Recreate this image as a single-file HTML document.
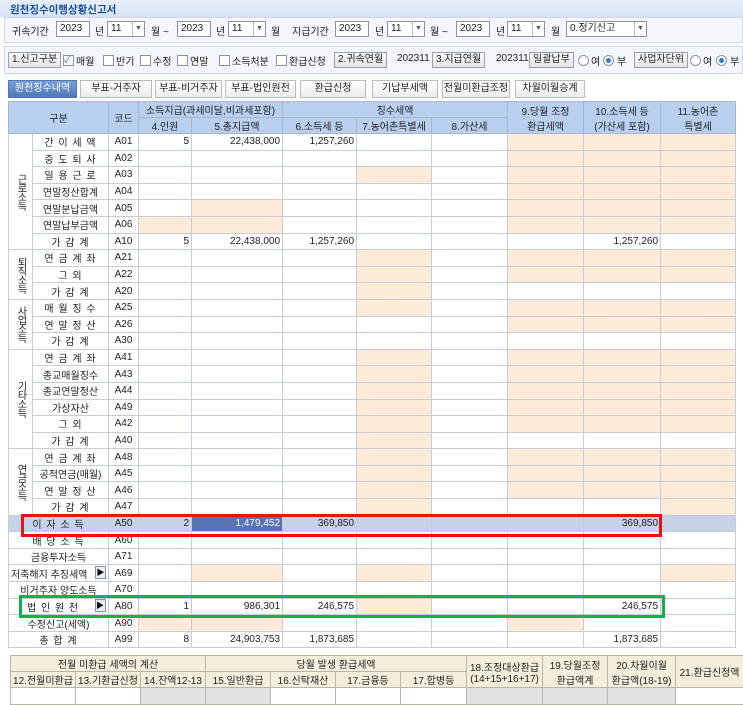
<!DOCTYPE html>
<html><head><meta charset="utf-8"><style>
*{box-sizing:border-box;margin:0;padding:0}
body{width:743px;height:705px;background:#fff;font-family:"Liberation Sans","Noto Sans CJK KR","NanumGothic",sans-serif;font-size:10px;color:#222;position:relative;overflow:hidden}
.a{position:absolute;white-space:nowrap}
.title{left:0;top:0;width:743px;height:17px;background:linear-gradient(#e6eefa,#d6e3f6);color:#1d4f9e;font-weight:bold;padding:2px 0 0 10px;font-size:10.5px}
.panel{left:4px;width:739px;background:#f3f6fb;border:1px solid #cfd8e6}
.in{background:#fff;border:1px solid #8a94a6;height:16px;line-height:14px;padding-left:3px;font-size:10px}
.sel{background:#fff;border:1px solid #8a94a6;height:16px;line-height:14px;padding-left:3px;font-size:10px}
.sel i{position:absolute;right:0;top:0;width:12px;height:14px;border-left:1px solid #bbb;font-style:normal;font-size:7px;text-align:center;line-height:14px;color:#555}
.btn{background:linear-gradient(#fafafa,#e4e4e4);border:1px solid #9aa0a8;height:16px;line-height:14px;padding:0 3px;font-size:10px}
.cb{width:11px;height:11px;border:1px solid #8a94a6;background:#fff}
.rd{width:11px;height:11px;border:1px solid #8a94a6;border-radius:50%;background:#fff}
.rd.on:after{content:"";position:absolute;left:2px;top:2px;width:5px;height:5px;border-radius:50%;background:#3a78d0}
.tab{top:80px;height:18px;line-height:16px;text-align:center;border:1px solid #b5bcc8;background:linear-gradient(#fff,#ececec);font-size:10px}
.tab.on{background:linear-gradient(#7a9fd4,#4f78b8);color:#fff;border-color:#4f78b8}
table{border-collapse:collapse;table-layout:fixed;position:absolute}
#t{left:8px;top:101px;width:733px}
#t td{border:1px solid #c6cdda;height:16.6px;font-size:10px;padding:0 2px;overflow:hidden;white-space:nowrap}
#t thead td{background:#b8cfee;text-align:center;height:16px;border-color:#a9b7cc}
#t td.l{text-align:center;letter-spacing:1px}
#t td.c{text-align:center}
#t td.n{text-align:right}
#t td.p{background:#fdebd7}
#t td.x{border:none;background:#fff !important}
#t td.g{text-align:center;writing-mode:vertical-lr;letter-spacing:-1px}
#t tr.h td{background:#c6d2e8}
#t tr.h td.dk{background:#5873b4;color:#fff}
.ar{display:inline-block;width:11px;height:13px;background:#e8eef8;border:1px solid #8a94a6;float:right;font-size:8px;line-height:11px;text-align:center;color:#000}
#b{left:10px;top:655px;width:733px}
#b td{border:1px solid #b9b6a6;background:#f3efdc;text-align:center;font-size:10px;white-space:nowrap;overflow:hidden;height:14px}
#b tr.d td{background:#fff;height:17px}
#b tr.d td.gr{background:#e2e2e2}
.box{position:absolute;border:3px solid}
</style></head><body>
<div class="a title">원천징수이행상황신고서</div>
<div class="a panel" style="top:17px;height:26px"></div>
<div class="a" style="left:12px;top:23px">귀속기간</div>
<div class="a in" style="left:56px;top:21px;width:34px">2023</div>
<div class="a" style="left:95px;top:23px">년</div>
<div class="a sel" style="left:107px;top:21px;width:38px">11<i>▼</i></div>
<div class="a" style="left:151px;top:23px">월 ~</div>
<div class="a in" style="left:177px;top:21px;width:34px">2023</div>
<div class="a" style="left:216px;top:23px">년</div>
<div class="a sel" style="left:228px;top:21px;width:38px">11<i>▼</i></div>
<div class="a" style="left:271px;top:23px">월</div>
<div class="a" style="left:292px;top:23px">지급기간</div>
<div class="a in" style="left:335px;top:21px;width:34px">2023</div>
<div class="a" style="left:375px;top:23px">년</div>
<div class="a sel" style="left:387px;top:21px;width:38px">11<i>▼</i></div>
<div class="a" style="left:430px;top:23px">월 ~</div>
<div class="a in" style="left:456px;top:21px;width:34px">2023</div>
<div class="a" style="left:496px;top:23px">년</div>
<div class="a sel" style="left:507px;top:21px;width:38px">11<i>▼</i></div>
<div class="a" style="left:551px;top:23px">월</div>
<div class="a sel" style="left:566px;top:21px;width:81px">0.정기신고<i>▼</i></div>

<div class="a panel" style="top:46px;height:28px"></div>
<div class="a btn" style="left:8px;top:52px">1.신고구분</div>
<div class="a cb" style="left:63px;top:55px;color:#3a78d0;font-size:10px;line-height:9px">✓</div><div class="a" style="left:76px;top:53px">매월</div>
<div class="a cb" style="left:103px;top:55px"></div><div class="a" style="left:116px;top:53px">반기</div>
<div class="a cb" style="left:140px;top:55px"></div><div class="a" style="left:153px;top:53px">수정</div>
<div class="a cb" style="left:177px;top:55px"></div><div class="a" style="left:190px;top:53px">연말</div>
<div class="a cb" style="left:219px;top:55px"></div><div class="a" style="left:232px;top:53px">소득처분</div>
<div class="a cb" style="left:276px;top:55px"></div><div class="a" style="left:289px;top:53px">환급신청</div>
<div class="a btn" style="left:334px;top:52px">2.귀속연월</div>
<div class="a" style="left:397px;top:53px">202311</div>
<div class="a btn" style="left:432px;top:52px">3.지급연월</div>
<div class="a" style="left:496px;top:53px">202311</div>
<div class="a btn" style="left:529px;top:52px">일괄납부</div>
<div class="a rd" style="left:578px;top:55px"></div><div class="a" style="left:591px;top:53px">여</div>
<div class="a rd on" style="left:603px;top:55px"></div><div class="a" style="left:617px;top:53px">부</div>
<div class="a btn" style="left:634px;top:52px">사업자단위</div>
<div class="a rd" style="left:690px;top:55px"></div><div class="a" style="left:703px;top:53px">여</div>
<div class="a rd on" style="left:716px;top:55px"></div><div class="a" style="left:730px;top:53px">부</div>

<div class="a tab on" style="left:8px;width:69px">원천징수내역</div>
<div class="a tab" style="left:80px;width:72px">부표-거주자</div>
<div class="a tab" style="left:155px;width:67px">부표-비거주자</div>
<div class="a tab" style="left:225px;width:71px">부표-법인원천</div>
<div class="a tab" style="left:300px;width:66px">환급신청</div>
<div class="a tab" style="left:372px;width:66px">기납부세액</div>
<div class="a tab" style="left:442px;width:68px">전월미환급조정</div>
<div class="a tab" style="left:515px;width:70px">차월이월승계</div>

<table id="t">
<colgroup><col style="width:24px"><col style="width:76px"><col style="width:30px"><col style="width:53px"><col style="width:91px"><col style="width:74px"><col style="width:75px"><col style="width:76px"><col style="width:76px"><col style="width:77px"><col style="width:75px"><col style="width:6px"></colgroup>
<thead>
<tr><td colspan="2" rowspan="2">구분</td><td rowspan="2">코드</td><td colspan="2">소득지급(과세미달,비과세포함)</td><td colspan="3">징수세액</td><td rowspan="2">9.당월 조정<br>환급세액</td><td rowspan="2">10.소득세 등<br>(가산세 포함)</td><td rowspan="2">11.농어촌<br>특별세</td><td rowspan="2" class="x"></td></tr>
<tr><td>4.인원</td><td>5.총지급액</td><td>6.소득세 등</td><td>7.농어촌특별세</td><td>8.가산세</td></tr>
</thead>
<tbody>
<tr><td class="g" rowspan="7">근로소득</td><td class="l">간 이 세 액</td><td class="c">A01</td><td class="n">5</td><td class="n">22,438,000</td><td class="n">1,257,260</td><td></td><td></td><td class="p"></td><td class="p"></td><td class="p"></td><td class="x"></td></tr>
<tr><td class="l">중 도 퇴 사</td><td class="c">A02</td><td></td><td></td><td></td><td></td><td></td><td class="p"></td><td class="p"></td><td class="p"></td><td class="x"></td></tr>
<tr><td class="l">일 용 근 로</td><td class="c">A03</td><td></td><td></td><td></td><td class="p"></td><td></td><td class="p"></td><td class="p"></td><td class="p"></td><td class="x"></td></tr>
<tr><td class="l" style="letter-spacing:0">연말정산합계</td><td class="c">A04</td><td></td><td></td><td></td><td></td><td></td><td class="p"></td><td class="p"></td><td class="p"></td><td class="x"></td></tr>
<tr><td class="l" style="letter-spacing:0">연말분납금액</td><td class="c">A05</td><td></td><td class="p"></td><td></td><td></td><td></td><td class="p"></td><td class="p"></td><td class="p"></td><td class="x"></td></tr>
<tr><td class="l" style="letter-spacing:0">연말납부금액</td><td class="c">A06</td><td class="p"></td><td class="p"></td><td></td><td></td><td></td><td class="p"></td><td class="p"></td><td class="p"></td><td class="x"></td></tr>
<tr><td class="l">가 감 계</td><td class="c">A10</td><td class="n">5</td><td class="n">22,438,000</td><td class="n">1,257,260</td><td></td><td></td><td></td><td class="n">1,257,260</td><td></td><td class="x"></td></tr>
<tr><td class="g" rowspan="3">퇴직소득</td><td class="l">연 금 계 좌</td><td class="c">A21</td><td></td><td></td><td></td><td class="p"></td><td></td><td class="p"></td><td class="p"></td><td class="p"></td><td class="x"></td></tr>
<tr><td class="l">그 외</td><td class="c">A22</td><td></td><td></td><td></td><td class="p"></td><td></td><td class="p"></td><td class="p"></td><td class="p"></td><td class="x"></td></tr>
<tr><td class="l">가 감 계</td><td class="c">A20</td><td></td><td></td><td></td><td class="p"></td><td></td><td></td><td></td><td></td><td class="x"></td></tr>
<tr><td class="g" rowspan="3">사업소득</td><td class="l">매 월 징 수</td><td class="c">A25</td><td></td><td></td><td></td><td class="p"></td><td></td><td class="p"></td><td class="p"></td><td class="p"></td><td class="x"></td></tr>
<tr><td class="l">연 말 정 산</td><td class="c">A26</td><td></td><td></td><td></td><td></td><td></td><td class="p"></td><td class="p"></td><td class="p"></td><td class="x"></td></tr>
<tr><td class="l">가 감 계</td><td class="c">A30</td><td></td><td></td><td></td><td></td><td></td><td></td><td></td><td></td><td class="x"></td></tr>
<tr><td class="g" rowspan="6">기타소득</td><td class="l">연 금 계 좌</td><td class="c">A41</td><td></td><td></td><td></td><td class="p"></td><td></td><td class="p"></td><td class="p"></td><td class="p"></td><td class="x"></td></tr>
<tr><td class="l" style="letter-spacing:0">종교매월징수</td><td class="c">A43</td><td></td><td></td><td></td><td class="p"></td><td></td><td class="p"></td><td class="p"></td><td class="p"></td><td class="x"></td></tr>
<tr><td class="l" style="letter-spacing:0">종교연말정산</td><td class="c">A44</td><td></td><td></td><td></td><td class="p"></td><td></td><td class="p"></td><td class="p"></td><td class="p"></td><td class="x"></td></tr>
<tr><td class="l" style="letter-spacing:0">가상자산</td><td class="c">A49</td><td></td><td></td><td></td><td class="p"></td><td></td><td class="p"></td><td class="p"></td><td class="p"></td><td class="x"></td></tr>
<tr><td class="l">그 외</td><td class="c">A42</td><td></td><td></td><td></td><td class="p"></td><td></td><td class="p"></td><td class="p"></td><td class="p"></td><td class="x"></td></tr>
<tr><td class="l">가 감 계</td><td class="c">A40</td><td></td><td></td><td></td><td class="p"></td><td></td><td></td><td></td><td></td><td class="x"></td></tr>
<tr><td class="g" rowspan="4">연금소득</td><td class="l">연 금 계 좌</td><td class="c">A48</td><td></td><td></td><td></td><td class="p"></td><td></td><td class="p"></td><td class="p"></td><td class="p"></td><td class="x"></td></tr>
<tr><td class="l" style="letter-spacing:0">공적연금(매월)</td><td class="c">A45</td><td></td><td></td><td></td><td class="p"></td><td></td><td class="p"></td><td class="p"></td><td class="p"></td><td class="x"></td></tr>
<tr><td class="l">연 말 정 산</td><td class="c">A46</td><td></td><td></td><td></td><td class="p"></td><td></td><td class="p"></td><td class="p"></td><td class="p"></td><td class="x"></td></tr>
<tr><td class="l">가 감 계</td><td class="c">A47</td><td></td><td></td><td></td><td class="p"></td><td></td><td></td><td></td><td class="p"></td><td class="x"></td></tr>
<tr class="h"><td colspan="2" class="l">이 자 소 득</td><td class="c">A50</td><td class="n">2</td><td class="n dk">1,479,452</td><td class="n">369,850</td><td></td><td></td><td></td><td class="n">369,850</td><td></td><td class="x"></td></tr>
<tr><td colspan="2" class="l">배 당 소 득</td><td class="c">A60</td><td></td><td></td><td></td><td></td><td></td><td></td><td></td><td></td><td class="x"></td></tr>
<tr><td colspan="2" class="l" style="letter-spacing:0">금융투자소득</td><td class="c">A71</td><td></td><td></td><td></td><td></td><td></td><td></td><td></td><td></td><td class="x"></td></tr>
<tr><td colspan="2" class="l" style="letter-spacing:0;text-align:left">저축해지 추징세액<span class="ar">▶</span></td><td class="c">A69</td><td></td><td class="p"></td><td></td><td class="p"></td><td></td><td></td><td></td><td class="p"></td><td class="x"></td></tr>
<tr><td colspan="2" class="l" style="letter-spacing:0">비거주자 양도소득</td><td class="c">A70</td><td></td><td></td><td></td><td></td><td></td><td></td><td></td><td></td><td class="x"></td></tr>
<tr><td colspan="2" class="l" style="text-align:left;padding-left:18px">법 인 원 천<span class="ar">▶</span></td><td class="c">A80</td><td class="n">1</td><td class="n">986,301</td><td class="n">246,575</td><td class="p"></td><td></td><td></td><td class="n">246,575</td><td></td><td class="x"></td></tr>
<tr><td colspan="2" class="l" style="letter-spacing:0">수정신고(세액)</td><td class="c">A90</td><td class="p"></td><td class="p"></td><td></td><td></td><td></td><td class="p"></td><td></td><td></td><td class="x"></td></tr>
<tr><td colspan="2" class="l">총 합 계</td><td class="c">A99</td><td class="n">8</td><td class="n">24,903,753</td><td class="n">1,873,685</td><td></td><td></td><td></td><td class="n">1,873,685</td><td></td><td class="x"></td></tr>
</tbody></table>

<div class="box" style="left:21px;top:514px;width:641px;height:23px;border-color:#ee1111"></div>
<div class="box" style="left:19px;top:595px;width:646px;height:23px;border-color:#12b24a"></div>

<table id="b">
<colgroup><col style="width:65px"><col style="width:65px"><col style="width:65px"><col style="width:65px"><col style="width:65px"><col style="width:65px"><col style="width:66px"><col style="width:76px"><col style="width:65px"><col style="width:68px"><col style="width:68px"></colgroup>
<tr><td colspan="3">전월 미환급 세액의 계산</td><td colspan="4">당월 발생 환급세액</td><td rowspan="2">18.조정대상환급<br>(14+15+16+17)</td><td rowspan="2">19.당월조정<br>환급액계</td><td rowspan="2">20.차월이월<br>환급액(18-19)</td><td rowspan="2">21.환급신청액</td></tr>
<tr><td>12.전월미환급</td><td>13.기환급신청</td><td>14.잔액12-13</td><td>15.일반환급</td><td>16.신탁재산</td><td>17.금융등</td><td>17.합병등</td></tr>
<tr class="d"><td></td><td></td><td class="gr"></td><td class="gr"></td><td></td><td></td><td></td><td class="gr"></td><td class="gr"></td><td class="gr"></td><td></td></tr>
</table>
</body></html>
